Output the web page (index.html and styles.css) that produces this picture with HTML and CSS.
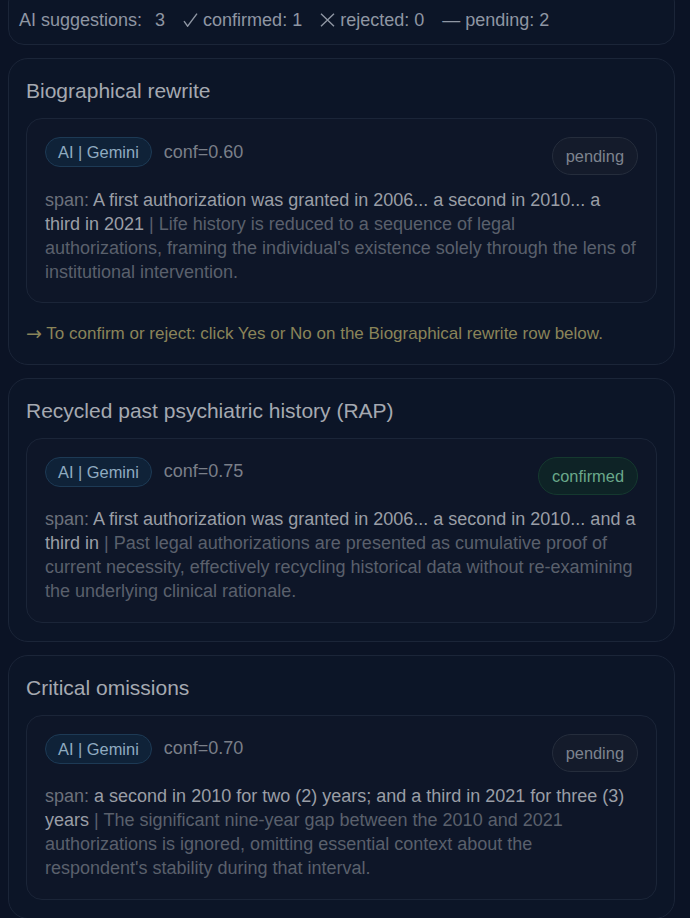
FILE: index.html
```html
<!DOCTYPE html>
<html lang="en">
<head>
<meta charset="utf-8">
<link rel="stylesheet" href="styles.css">
</head>
<body>
<div class="page">
  <div class="summary">
    <span class="sum-label">AI suggestions:</span>
    <span class="sum-num">3</span>
    <span class="sum-item"><svg class="ico" width="15" height="14" viewBox="0 0 15 14"><path d="M1 8.2 L4.6 13.2 L14 0.6" fill="none" stroke="#8f96a3" stroke-width="1.4"/></svg> confirmed: 1</span>
    <span class="sum-item"><svg class="ico" width="15" height="14" viewBox="0 0 15 14"><path d="M1 0.8 L14 13.2 M14 0.8 L1 13.2" fill="none" stroke="#8f96a3" stroke-width="1.4"/></svg> rejected: 0</span>
    <span class="sum-item">— pending: 2</span>
  </div>

  <section class="group">
    <h2 class="group-title">Biographical rewrite</h2>
    <div class="sugg">
      <div class="sugg-head">
        <div class="meta">
          <span class="pill-ai">AI | Gemini</span>
          <span class="conf">conf=0.60</span>
        </div>
        <span class="status status-pending">pending</span>
      </div>
      <p class="sugg-body"><span class="lbl">span:</span> <span class="quote">A first authorization was granted in 2006... a second in 2010... a third in 2021</span> <span class="reason">| Life history is reduced to a sequence of legal authorizations, framing the individual's existence solely through the lens of institutional intervention.</span></p>
    </div>
    <p class="hint"><span class="arrow">→</span> To confirm or reject: click Yes or No on the Biographical rewrite row below.</p>
  </section>

  <section class="group">
    <h2 class="group-title">Recycled past psychiatric history (RAP)</h2>
    <div class="sugg">
      <div class="sugg-head">
        <div class="meta">
          <span class="pill-ai">AI | Gemini</span>
          <span class="conf">conf=0.75</span>
        </div>
        <span class="status status-confirmed">confirmed</span>
      </div>
      <p class="sugg-body"><span class="lbl">span:</span> <span class="quote">A first authorization was granted in 2006... a second in 2010... and a third in</span> <span class="reason">| Past legal authorizations are presented as cumulative proof of current necessity, effectively recycling historical data without re-examining the underlying clinical rationale.</span></p>
    </div>
  </section>

  <section class="group">
    <h2 class="group-title">Critical omissions</h2>
    <div class="sugg">
      <div class="sugg-head">
        <div class="meta">
          <span class="pill-ai">AI | Gemini</span>
          <span class="conf">conf=0.70</span>
        </div>
        <span class="status status-pending">pending</span>
      </div>
      <p class="sugg-body"><span class="lbl">span:</span> <span class="quote">a second in 2010 for two (2) years; and a third in 2021 for three (3) years</span> <span class="reason">| The significant nine-year gap between the 2010 and 2021 authorizations is ignored, omitting essential context about the respondent's stability during that interval.</span></p>
    </div>
  </section>
</div>
</body>
</html>
```
FILE: styles.css
```css
html, body {
  margin: 0;
  padding: 0;
  background: #0b1325;
}
body {
  font-family: "Liberation Sans", Arial, sans-serif;
  color: #9ca3af;
  height: 918px;
  overflow: hidden;
}
.page {
  width: 667px;
  margin-left: 8px;
  margin-top: -14px;
  display: flex;
  flex-direction: column;
  gap: 13px;
}
.summary {
  border: 1px solid #1b2538;
  border-radius: 16px;
  background: #0c1527;
  padding: 22px 10px 13px;
  display: flex;
  align-items: center;
  font-size: 18px;
  line-height: 22px;
  color: #8f96a3;
}
.sum-num { margin-left: 13px; }
.sum-item {
  margin-left: 18px;
  display: inline-flex;
  align-items: center;
  white-space: pre;
}
.ico { display: block; }
.group {
  border: 1px solid #1b2538;
  border-radius: 20px;
  background: #0c1527;
  padding: 20px 17px 18px;
}
.group-title {
  margin: 0 0 15px;
  font-size: 21px;
  line-height: 24px;
  font-weight: normal;
  color: #a5a9b1;
}
.sugg {
  border: 1px solid #1b2538;
  border-radius: 16px;
  background: #0e1628;
  padding: 18px 19.5px 18.5px 18px;
}
.sugg-head {
  display: flex;
  justify-content: space-between;
  align-items: flex-start;
}
.meta {
  display: flex;
  align-items: center;
  gap: 12px;
}
.pill-ai {
  display: inline-block;
  border: 1px solid #1d3a55;
  background: #0f2238;
  color: #8fabc0;
  border-radius: 15px;
  padding: 5px 12px;
  font-size: 16.4px;
  line-height: 18px;
}
.conf {
  font-size: 18px;
  color: #7a7f89;
}
.status {
  display: inline-block;
  border-radius: 19px;
  padding: 9px 13px;
  margin-right: -1.5px;
  font-size: 16.4px;
  line-height: 18px;
}
.status-pending {
  border: 1px solid #252d3c;
  background: #141b2b;
  color: #7d838e;
}
.status-confirmed {
  border: 1px solid #15392f;
  background: #0e2326;
  color: #6aa88a;
}
.sugg-body {
  margin: 12.5px 0 0;
  font-size: 18px;
  line-height: 24px;
  color: #5f6675;
}
.sugg-body .lbl { color: #6c717b; }
.sugg-body .quote { color: #9a9ea6; }
.sugg-body .reason { color: #5a606c; }
.hint {
  margin: 18.5px 0 0;
  font-size: 17px;
  line-height: 24px;
  color: #8a8459;
}
.hint .arrow {
  font-family: "DejaVu Sans", sans-serif;
  font-size: 19px;
  line-height: 20px;
  vertical-align: -1px;
}
```
